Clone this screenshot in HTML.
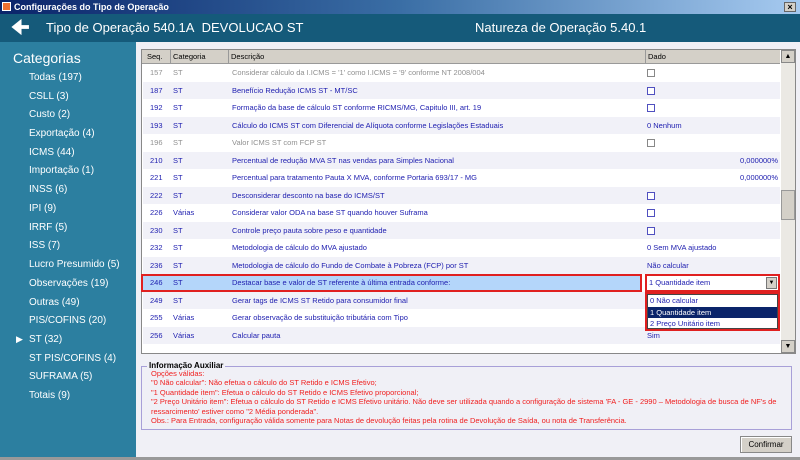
<!DOCTYPE html>
<html><head><meta charset="utf-8"><style>
*{margin:0;padding:0;box-sizing:border-box}
body{width:800px;height:460px;overflow:hidden;font-family:"Liberation Sans",sans-serif;background:#f0f0f6;position:relative}
.abs{position:absolute}
#title{left:0;top:0;width:800px;height:14px;background:linear-gradient(90deg,#0a246a,#3a6ea5 50%,#a6caf0);color:#fff;font-size:9px;font-weight:bold;line-height:14px;padding-left:14px}
#hdr{left:0;top:14px;width:800px;height:28px;background:#155a7a;color:#fff;font-size:13px;line-height:28px}
#side{left:0;top:42px;width:136px;height:418px;background:#2c7fa0;color:#fff}
.cat{position:absolute;left:29px;font-size:10px}
.row{position:absolute;left:143px;width:637px;height:17.5px;font-size:7.5px;line-height:17.5px;color:#2020b0}
.row span{position:absolute;top:0;white-space:nowrap}
.g{color:#909090}
.cb{display:inline-block;width:8px;height:8px;border:1px solid #5050c0;position:absolute;top:5px;left:504px;background:#fff}
.g .cb{border-color:#888}
.info{font-size:7.5px;color:#f02020;line-height:9.4px;white-space:nowrap}
</style></head><body>
<div id="title" class="abs"><div class="abs" style="left:2px;top:2px;width:9px;height:9px;background:#f07030;border:1px solid #fff"></div>Configurações do Tipo de Operação
<div class="abs" style="right:4px;top:2px;width:12px;height:10px;background:#d4d0c8;border:1px solid #666;color:#000;font-size:9px;line-height:8px;text-align:center">×</div></div>
<div id="hdr" class="abs"><span class="abs" style="left:11px;top:0;font-size:20px;font-weight:bold">&#129032;</span><span class="abs" style="left:46px">Tipo de Operação 540.1A&nbsp; DEVOLUCAO ST</span><span class="abs" style="left:475px">Natureza de Operação 5.40.1</span></div>
<div id="side" class="abs">
<div class="abs" style="left:13px;top:8px;font-size:14px">Categorias</div>
<div class="cat" style="top:30px">Todas (197)</div>
<div class="cat" style="top:49px">CSLL (3)</div>
<div class="cat" style="top:67px">Custo (2)</div>
<div class="cat" style="top:86px">Exportação (4)</div>
<div class="cat" style="top:105px">ICMS (44)</div>
<div class="cat" style="top:123px">Importação (1)</div>
<div class="cat" style="top:142px">INSS (6)</div>
<div class="cat" style="top:161px">IPI (9)</div>
<div class="cat" style="top:180px">IRRF (5)</div>
<div class="cat" style="top:198px">ISS (7)</div>
<div class="cat" style="top:217px">Lucro Presumido (5)</div>
<div class="cat" style="top:236px">Observações (19)</div>
<div class="cat" style="top:255px">Outras (49)</div>
<div class="cat" style="top:273px">PIS/COFINS (20)</div>
<div class="cat" style="top:292px"><span class="abs" style="left:-13px;font-size:9px">▶</span>ST (32)</div>
<div class="cat" style="top:311px">ST PIS/COFINS (4)</div>
<div class="cat" style="top:329px">SUFRAMA (5)</div>
<div class="cat" style="top:348px">Totais (9)</div>
</div>
<div class="abs" style="left:141px;top:49px;width:655px;height:305px;border:1px solid #888;background:#fff"></div>
<div class="abs" style="left:142px;top:50px;width:638px;height:14px;background:#d4d0c8;font-size:7.5px;line-height:14px;border-bottom:1px solid #999">
<span class="abs" style="left:5px">Seq.</span><span class="abs" style="left:28px;border-left:1px solid #999;padding-left:2px;height:14px">Categoria</span><span class="abs" style="left:86px;border-left:1px solid #999;padding-left:2px;height:14px">Descrição</span><span class="abs" style="left:503px;border-left:1px solid #999;padding-left:2px;height:14px">Dado</span></div>
<div class="abs" style="left:781px;top:50px;width:14px;height:303px;background:#ebe9e4"><div style="height:13px;background:#d4d0c8;border:1px solid #888;font-size:7px;text-align:center;line-height:11px">▲</div><div class="abs" style="top:140px;left:0;width:14px;height:30px;background:#d4d0c8;border:1px solid #999"></div><div class="abs" style="bottom:0;width:14px;height:13px;background:#d4d0c8;border:1px solid #888;font-size:7px;text-align:center;line-height:11px">▼</div></div>

<div class="row g" style="top:64px;background:#fff"><span style="left:7px">157</span><span style="left:30px">ST</span><span style="left:89px">Considerar cálculo da I.ICMS = '1' como I.ICMS = '9' conforme NT 2008/004</span><i class="cb"></i></div>
<div class="row" style="top:81.5px;background:#f1f1f8"><span style="left:7px">187</span><span style="left:30px">ST</span><span style="left:89px">Benefício Redução ICMS ST - MT/SC</span><i class="cb"></i></div>
<div class="row" style="top:99px;background:#fff"><span style="left:7px">192</span><span style="left:30px">ST</span><span style="left:89px">Formação da base de cálculo ST conforme RICMS/MG, Capitulo III, art. 19</span><i class="cb"></i></div>
<div class="row" style="top:116.5px;background:#f1f1f8"><span style="left:7px">193</span><span style="left:30px">ST</span><span style="left:89px">Cálculo do ICMS ST com Diferencial de Alíquota conforme Legislações Estaduais</span><span style="left:504px">0 Nenhum</span></div>
<div class="row g" style="top:134px;background:#fff"><span style="left:7px">196</span><span style="left:30px">ST</span><span style="left:89px">Valor ICMS ST com FCP ST</span><i class="cb"></i></div>
<div class="row" style="top:151.5px;background:#f1f1f8"><span style="left:7px">210</span><span style="left:30px">ST</span><span style="left:89px">Percentual de redução MVA ST nas vendas para Simples Nacional</span><span style="right:2px">0,000000%</span></div>
<div class="row" style="top:169px;background:#fff"><span style="left:7px">221</span><span style="left:30px">ST</span><span style="left:89px">Percentual para tratamento Pauta X MVA, conforme Portaria 693/17 - MG</span><span style="right:2px">0,000000%</span></div>
<div class="row" style="top:186.5px;background:#f1f1f8"><span style="left:7px">222</span><span style="left:30px">ST</span><span style="left:89px">Desconsiderar desconto na base do ICMS/ST</span><i class="cb"></i></div>
<div class="row" style="top:204px;background:#fff"><span style="left:7px">226</span><span style="left:30px">Várias</span><span style="left:89px">Considerar valor ODA na base ST quando houver Suframa</span><i class="cb"></i></div>
<div class="row" style="top:221.5px;background:#f1f1f8"><span style="left:7px">230</span><span style="left:30px">ST</span><span style="left:89px">Controle preço pauta sobre peso e quantidade</span><i class="cb"></i></div>
<div class="row" style="top:239px;background:#fff"><span style="left:7px">232</span><span style="left:30px">ST</span><span style="left:89px">Metodologia de cálculo do MVA ajustado</span><span style="left:504px">0 Sem MVA ajustado</span></div>
<div class="row" style="top:256.5px;background:#f1f1f8"><span style="left:7px">236</span><span style="left:30px">ST</span><span style="left:89px">Metodologia de cálculo do Fundo de Combate à Pobreza (FCP) por ST</span><span style="left:504px">Não calcular</span></div>
<div class="row" style="top:274px;background:#fff"><div class="abs" style="left:-2px;top:0;width:501px;height:18px;background:#b4d6fa;border:2px solid #e02020"></div><span style="left:7px">246</span><span style="left:30px">ST</span><span style="left:89px">Destacar base e valor de ST referente à última entrada conforme:</span></div>
<div class="row" style="top:291.5px;background:#f1f1f8"><span style="left:7px">249</span><span style="left:30px">ST</span><span style="left:89px">Gerar tags de ICMS ST Retido para consumidor final</span></div>
<div class="row" style="top:309px;background:#fff"><span style="left:7px">255</span><span style="left:30px">Várias</span><span style="left:89px">Gerar observação de substituição tributária com Tipo</span></div>
<div class="row" style="top:326.5px;background:#f1f1f8"><span style="left:7px">256</span><span style="left:30px">Várias</span><span style="left:89px">Calcular pauta</span><span style="left:504px">Sim</span></div>

<div class="abs" style="left:645px;top:274px;width:135px;height:18px;border:2px solid #e02020;background:#fff;font-size:7.5px;color:#2020b0;line-height:14px;padding-left:2px">1 Quantidade item<div class="abs" style="right:1px;top:1px;width:11px;height:12px;background:#d4d0c8;border:1px solid #777;font-size:6px;color:#000;text-align:center;line-height:10px">▼</div></div>
<div class="abs" style="left:645px;top:292px;width:135px;height:39px;border:2px solid #e02020;background:#fff;font-size:7.5px;color:#2020b0;line-height:11.5px">
<div style="border:1px solid #444;height:35px;margin:0">
<div style="padding-left:2px">0 Não calcular</div><div style="padding-left:2px;background:#0a246a;color:#fff">1 Quantidade item</div><div style="padding-left:2px">2 Preço Unitário item</div></div></div>

<div class="abs" style="left:141px;top:366px;width:651px;height:64px;border:1px solid #a8a0d8"></div>
<div class="abs" style="left:147px;top:361px;font-size:8px;font-weight:bold;background:#f0f0f6;padding:0 2px;color:#000">Informação Auxiliar</div>
<div class="abs info" style="left:151px;top:369px">Opções válidas:<br>"0 Não calcular": Não efetua o cálculo do ST Retido e ICMS Efetivo;<br>"1 Quantidade item": Efetua o cálculo do ST Retido e ICMS Efetivo proporcional;<br>"2 Preço Unitário item": Efetua o cálculo do ST Retido e ICMS Efetivo unitário. Não deve ser utilizada quando a configuração de sistema 'FA - GE - 2990 – Metodologia de busca de NF's de<br>ressarcimento' estiver como "2 Média ponderada".<br>Obs.: Para Entrada, configuração válida somente para Notas de devolução feitas pela rotina de Devolução de Saída, ou nota de Transferência.</div>
<div class="abs" style="left:740px;top:436px;width:52px;height:17px;background:#d4d0c8;border:1px solid #888;box-shadow:inset 1px 1px #fff;font-size:8px;text-align:center;line-height:15px">Confirmar</div>
<div class="abs" style="left:0;top:457px;width:800px;height:3px;background:#999"></div>
</body></html>
